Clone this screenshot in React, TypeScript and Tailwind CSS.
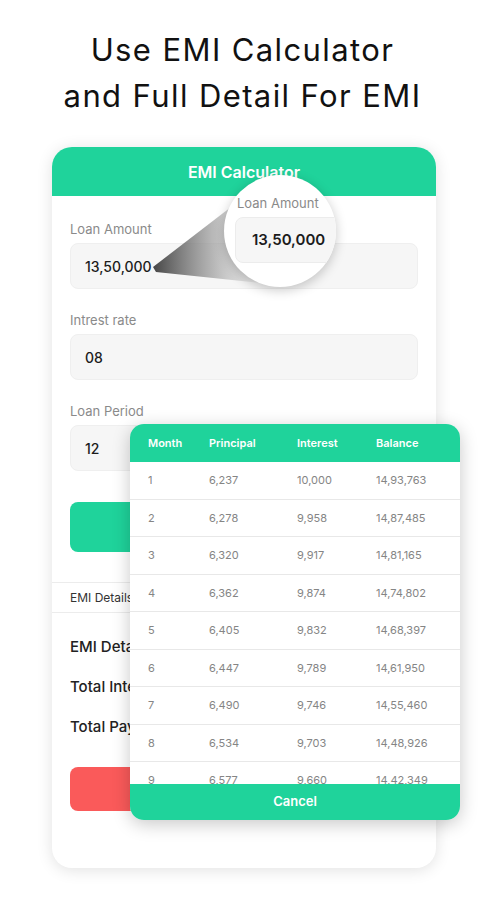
import React from "react";

const rows = [
  ["1", "6,237", "10,000", "14,93,763"],
  ["2", "6,278", "9,958", "14,87,485"],
  ["3", "6,320", "9,917", "14,81,165"],
  ["4", "6,362", "9,874", "14,74,802"],
  ["5", "6,405", "9,832", "14,68,397"],
  ["6", "6,447", "9,789", "14,61,950"],
  ["7", "6,490", "9,746", "14,55,460"],
  ["8", "6,534", "9,703", "14,48,926"],
  ["9", "6,577", "9,660", "14,42,349"],
];

const fields = [
  { label: "Loan Amount", value: "13,50,000" },
  { label: "Intrest rate", value: "08" },
  { label: "Loan Period", value: "12" },
];

function Field({ label, value, first }: { label: string; value: string; first?: boolean }) {
  return (
    <div className={first ? "" : "mt-[22px]"}>
      <div className="text-[13px] leading-[18px] text-[#8a8a8a]">{label}</div>
      <div className="mt-[5px] h-[46px] rounded-lg bg-[#f6f6f6] border border-[#efefef] flex items-center px-[14px] text-[14px] font-medium text-[#1c1c1c]">
        {value}
      </div>
    </div>
  );
}

export default function App() {
  return (
    <div
      className="w-[485px] h-[900px] bg-white overflow-hidden"
      style={{ fontFamily: "Inter, 'Noto Sans', sans-serif" }}
    >
      <h1 className="pt-[27px] text-center text-[31px] leading-[46px] font-normal text-[#111] tracking-[1.4px]">
        Use EMI Calculator
        <br />
        and Full Detail For EMI
      </h1>

      <div className="relative ml-[52px] mt-[28px] w-[384px] h-[721px] rounded-[20px] bg-white shadow-[0_2px_16px_rgba(0,0,0,0.12)]">
        <div className="h-[49px] rounded-t-[20px] bg-[#1fd39b] flex items-center justify-center text-white text-[16px] font-semibold">
          EMI Calculator
        </div>

        <div className="px-[18px] pt-[24px]">
          {fields.map((f, i) => (
            <Field key={f.label} label={f.label} value={f.value} first={i === 0} />
          ))}
          <div className="mt-[31px] h-[50px] rounded-lg bg-[#1fd39b]" />
        </div>

        <div className="mt-[30px] h-[31px] border-y border-[#ececec] flex items-center px-[18px] text-[12px] text-[#333]">
          EMI Details
        </div>

        <div className="px-[18px] pt-[14px]">
          {["EMI Details", "Total Interest", "Total Payment"].map((t) => (
            <div key={t} className="h-[40px] flex items-center text-[15px] font-medium text-[#222]">
              {t}
            </div>
          ))}
          <div className="mt-[20px] h-[44px] rounded-lg bg-[#fa5a5a]" />
        </div>

        {/* magnifier cone */}
        <svg className="absolute left-0 top-0" width="384" height="200" viewBox="0 0 384 200">
          <defs>
            <linearGradient id="cone" x1="100" y1="0" x2="210" y2="0" gradientUnits="userSpaceOnUse">
              <stop offset="0" stopColor="#3a3a3a" stopOpacity="0.95" />
              <stop offset="0.55" stopColor="#9a9a9a" stopOpacity="0.7" />
              <stop offset="1" stopColor="#e2e2e2" stopOpacity="0.4" />
            </linearGradient>
          </defs>
          <polygon points="101,120 104,125 218,137 192,50" fill="url(#cone)" />
        </svg>

        {/* magnifier circle */}
        <div className="absolute left-[172px] top-[28px] w-[112px] h-[112px] rounded-full bg-white overflow-hidden shadow-[0_3px_12px_rgba(0,0,0,0.22)]">
          <div className="absolute left-[13px] top-[19px] text-[13px] leading-[18px] text-[#8a8a8a] whitespace-nowrap">
            Loan Amount
          </div>
          <div className="absolute left-[11px] top-[42px] w-[140px] h-[46px] rounded-lg bg-[#f6f6f6] border border-[#ececec] flex items-center pl-[16px] text-[15px] font-semibold text-[#1c1c1c]">
            13,50,000
          </div>
        </div>

        {/* schedule popup */}
        <div className="absolute left-[78px] top-[277px] w-[330px] h-[396px] rounded-[14px] bg-white overflow-hidden flex flex-col shadow-[0_4px_18px_rgba(0,0,0,0.22)]">
          <div className="h-[38px] shrink-0 bg-[#1fd39b] grid grid-cols-[61px_88px_79px_1fr] items-center pl-[18px] text-white text-[11px] font-semibold">
            <span>Month</span>
            <span>Principal</span>
            <span>Interest</span>
            <span>Balance</span>
          </div>
          <div className="flex-1 overflow-hidden">
            {rows.map((r) => (
              <div
                key={r[0]}
                className="h-[37.5px] border-b border-[#e8e8e8] grid grid-cols-[61px_88px_79px_1fr] items-center pl-[18px] text-[11px] text-[#858585]"
              >
                {r.map((c, j) => (
                  <span key={j}>{c}</span>
                ))}
              </div>
            ))}
          </div>
          <div className="h-[36px] shrink-0 bg-[#1fd39b] flex items-center justify-center text-white text-[13px] font-semibold">
            Cancel
          </div>
        </div>
      </div>
    </div>
  );
}
